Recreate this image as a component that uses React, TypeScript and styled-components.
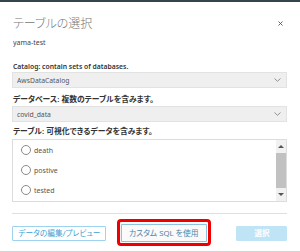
import React from "react";
import styled, { createGlobalStyle } from "styled-components";

const Global = createGlobalStyle`
	body {
		margin: 0;
		background: #ffffff;
		font-family: "Noto Sans", "Noto Sans CJK JP", sans-serif;
		font-feature-settings: "palt";
	}
`;

// the browser will not draw text under ~9px, so small text is set at 10px and scaled down
const Text = styled.span<{ $size: number; $origin?: string }>`
	display: inline-block;
	font-size: 10px;
	line-height: 12px;
	white-space: nowrap;
	transform: scale(${(p) => p.$size / 10});
	transform-origin: ${(p) => p.$origin ?? "left center"};
`;

const Modal = styled.div`
	width: 300px;
	height: 252px;
	box-sizing: border-box;
	border-top: 2px solid #33464f;
	border-bottom: 1px solid #d4d4d4;
	padding: 0 13px 0 12px;
	display: flex;
	flex-direction: column;
	overflow: hidden;
`;

const Header = styled.div`
	display: flex;
	justify-content: space-between;
	align-items: center;
	height: 20px;
	margin-top: 11px;
`;

const Title = styled.h2`
	margin: 0 0 0 1px;
	font-size: 12px;
	font-weight: 300;
	color: #777;
`;

const Close = styled.svg`
	margin-right: 4px;
`;

const Sub = styled.div`
	margin-top: 3px;
	margin-left: 1px;
	height: 12px;
	display: flex;
	align-items: center;
	color: #444;
`;

const Label = styled.div<{ $top: number }>`
	margin-top: ${(p) => p.$top}px;
	margin-left: 1px;
	height: 12px;
	display: flex;
	align-items: center;
	font-weight: 600;
	color: #333;
`;

const Select = styled.div<{ $top?: number }>`
	margin-top: ${(p) => p.$top ?? 0}px;
	height: 16px;
	box-sizing: border-box;
	background: #efefef;
	border: 1px solid #e2e2e2;
	display: flex;
	align-items: center;
	justify-content: space-between;
	padding: 0 5px 0 4px;
	color: #555;
`;

const List = styled.div`
	margin-top: 2px;
	height: 63px;
	box-sizing: border-box;
	border: 1px solid #dcdcdc;
	display: flex;
`;

const Options = styled.div`
	flex: 1;
	padding: 4px 0 0 8px;
	display: flex;
	flex-direction: column;
	gap: 8px;
`;

const Option = styled.label`
	display: flex;
	align-items: center;
	gap: 3px;
	height: 12px;
	color: #555;
`;

const Radio = styled.span`
	width: 8px;
	height: 8px;
	border: 1px solid #8a8a8a;
	border-radius: 50%;
`;

const Scrollbar = styled.div`
	width: 10px;
	background: #f1f1f1;
	display: flex;
	flex-direction: column;
	align-items: center;
	justify-content: space-between;
`;

const Arrow = styled.span<{ $up?: boolean }>`
	width: 0;
	height: 0;
	margin: 5px 0;
	border-left: 3px solid transparent;
	border-right: 3px solid transparent;
	${(p) => (p.$up ? "border-bottom: 3px solid #555;" : "border-top: 3px solid #555;")}
`;

const Thumb = styled.div`
	width: 10px;
	flex: 1;
	background: #c1c1c1;
`;

const Divider = styled.hr`
	margin: 11px 0 0;
	border: none;
	border-top: 1px solid #e0e0e0;
`;

const Buttons = styled.div`
	margin-top: 10px;
	display: flex;
	align-items: center;
`;

const Button = styled.button<{ $variant: "link" | "plain" | "primary" }>`
	height: 15px;
	box-sizing: border-box;
	padding: 0;
	font-family: inherit;
	font-feature-settings: "palt";
	display: flex;
	align-items: center;
	justify-content: center;
	overflow: visible;
	border-radius: 1px;
	${(p) =>
		p.$variant === "link"
			? "width: 94px; background: #fff; border: 1px solid #9dd3ef; color: #3c9fd5;"
			: p.$variant === "plain"
			? "width: 86px; height: 18px; background: #fafafa; border: 1px solid #8ec2de; color: #4d87aa; box-shadow: 0 0 1px #bbb;"
			: "width: 51px; margin-left: auto; background: #bfe4f6; border: 1px solid #bfe4f6; color: #fff; font-weight: 600;"}
`;

const Highlight = styled.div`
	position: relative;
	margin-left: 15px;
	&::after {
		content: "";
		position: absolute;
		left: -4px;
		right: -4px;
		top: -5px;
		bottom: -4px;
		border: 3.5px solid #ee0000;
		border-radius: 4px;
	}
`;

const Chevron = () => (
	<svg width="7" height="4" viewBox="0 0 7 4">
		<path d="M0.5 0.5 L3.5 3.3 L6.5 0.5" fill="none" stroke="#888" strokeWidth="0.9" />
	</svg>
);

const tables = ["death", "postive", "tested"];

export default function App() {
	return (
		<>
			<Global />
			<Modal>
				<Header>
					<Title>テーブルの選択</Title>
					<Close width="5" height="5" viewBox="0 0 5 5">
						<path d="M0.5 0.5 L4.5 4.5 M4.5 0.5 L0.5 4.5" stroke="#555" strokeWidth="0.9" />
					</Close>
				</Header>
				<Sub>
					<Text $size={7}>yama-test</Text>
				</Sub>
				<Label $top={12}>
					<Text $size={6.8}>Catalog: contain sets of databases.</Text>
				</Label>
				<Select>
					<Text $size={6.8}>AwsDataCatalog</Text>
					<Chevron />
				</Select>
				<Label $top={5}>
					<Text $size={7.8}>データベース: 複数のテーブルを含みます。</Text>
				</Label>
				<Select $top={1}>
					<Text $size={6.8}>covid_data</Text>
					<Chevron />
				</Select>
				<Label $top={3}>
					<Text $size={7.8}>テーブル: 可視化できるデータを含みます。</Text>
				</Label>
				<List>
					<Options>
						{tables.map((t) => (
							<Option key={t}>
								<Radio />
								<Text $size={7}>{t}</Text>
							</Option>
						))}
					</Options>
					<Scrollbar>
						<Arrow $up />
						<Thumb />
						<Arrow />
					</Scrollbar>
				</List>
				<Divider />
				<Buttons>
					<Button $variant="link">
						<Text $size={7.7} $origin="center">データの編集/プレビュー</Text>
					</Button>
					<Highlight>
						<Button $variant="plain">
							<Text $size={7.8} $origin="center">カスタム SQL を使用</Text>
						</Button>
					</Highlight>
					<Button $variant="primary">
						<Text $size={7.5} $origin="center">選択</Text>
					</Button>
				</Buttons>
			</Modal>
		</>
	);
}
